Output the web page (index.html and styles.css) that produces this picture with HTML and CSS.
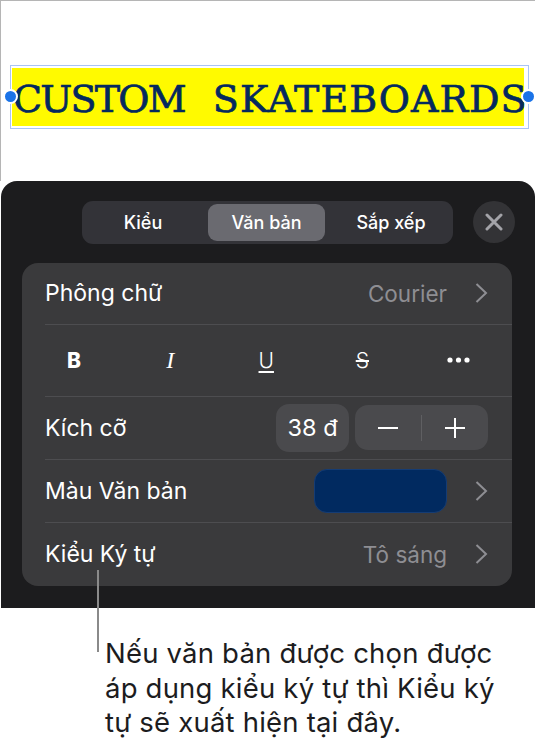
FILE: index.html
```html
<!DOCTYPE html>
<html lang="vi">
<head>
<meta charset="utf-8">
<title>Kiểu Ký tự</title>
<link rel="stylesheet" href="styles.css">
</head>
<body>
<div class="page">
  <div class="canvas">
    <div class="selection">
      <span class="handle handle-left"></span>
      <div class="highlight"><span class="word-a">CUSTOM</span> <span class="word-b">SKATEBOARDS</span></div>
      <span class="handle handle-right"></span>
    </div>
  </div>
  <section class="sheet">
    <div class="tabs-row">
      <div class="tabs">
        <div class="tab tab-first">Kiểu</div>
        <div class="tab tab-active">Văn bản</div>
        <div class="tab tab-last">Sắp xếp</div>
      </div>
      <div class="close">
        <svg width="18" height="18" viewBox="0 0 18 18"><path d="M2 2 16 16M16 2 2 16" stroke="#a3a3a8" stroke-width="3" stroke-linecap="round"/></svg>
      </div>
    </div>
    <div class="card">
      <div class="row row-font">
        <span class="label">Phông chữ</span>
        <span class="value">Courier</span>
        <svg class="chev" width="13" height="22" viewBox="0 0 13 22"><path d="M1.5 2 11 11 1.5 20" fill="none" stroke="#8e8e93" stroke-width="2"/></svg>
      </div>
      <div class="row row-style">
        <span class="st st-b">B</span>
        <span class="st st-i">I</span>
        <span class="st st-u">U</span>
        <span class="st st-s">S</span>
        <span class="st"><svg width="23" height="6" viewBox="0 0 23 6"><circle cx="3" cy="3" r="2.6" fill="#fff"/><circle cx="11.5" cy="3" r="2.6" fill="#fff"/><circle cx="20" cy="3" r="2.6" fill="#fff"/></svg></span>
      </div>
      <div class="row row-size">
        <span class="label">Kích cỡ</span>
        <span class="size-box">38 đ</span>
        <div class="stepper">
          <span class="step"><svg width="20" height="20" viewBox="0 0 20 20"><path d="M0 10H20" stroke="#fff" stroke-width="2"/></svg></span>
          <span class="step-div"></span>
          <span class="step"><svg width="20" height="20" viewBox="0 0 20 20"><path d="M0 10H20M10 0V20" stroke="#fff" stroke-width="2"/></svg></span>
        </div>
      </div>
      <div class="row row-color">
        <span class="label">Màu Văn bản</span>
        <span class="swatch"></span>
        <svg class="chev" width="13" height="22" viewBox="0 0 13 22"><path d="M1.5 2 11 11 1.5 20" fill="none" stroke="#8e8e93" stroke-width="2"/></svg>
      </div>
      <div class="row row-char">
        <span class="label">Kiểu Ký tự</span>
        <span class="value">Tô sáng</span>
        <svg class="chev" width="13" height="22" viewBox="0 0 13 22"><path d="M1.5 2 11 11 1.5 20" fill="none" stroke="#8e8e93" stroke-width="2"/></svg>
      </div>
    </div>
  </section>
  <div class="note">
    <span class="leader"></span>
    <p class="caption">Nếu văn bản được chọn được áp dụng kiểu ký tự thì Kiểu ký tự sẽ xuất hiện tại đây.</p>
  </div>
</div>
</body>
</html>
```
FILE: styles.css
```css
* { box-sizing: border-box; }
html, body { margin: 0; padding: 0; background: #fff; }
body { font-family: Inter, "Noto Sans", sans-serif; }
.page { width: 535px; height: 742px; position: relative; overflow: hidden; display: flex; flex-direction: column; }
.canvas { height: 181px; flex: none; padding: 64px 5px 0 10px; border-left: 1px solid #b5b5b5; border-top: 1px solid #b5b5b5; }
.selection { position: relative; width: 519px; height: 64px; border: 1.5px solid #a9c4f5; padding: 1.5px 4px 3px 1px; margin-left: -1px; }
.highlight { height: 58px; background: #fffa00; color: #04295f; font-family: "DejaVu Serif", serif; font-size: 38px; word-spacing: 16px; line-height: 63px; white-space: nowrap; padding-left: 1px; -webkit-text-stroke: 0.7px #04295f; }
.word-a { letter-spacing: -1.8px; }
.word-b { letter-spacing: 1px; }
.handle { position: absolute; top: 23px; width: 15px; height: 15px; border-radius: 50%; background: #1a73e8; border: 2.5px solid #fff; z-index: 1; }
.handle-left { left: -8px; }
.handle-right { right: -8px; }
.sheet { margin-left: 1px; height: 427px; flex: none; background: #1c1c1e; border-radius: 16px 16px 0 0; padding: 19.5px 0 0 21px; }
.tabs-row { display: flex; align-items: center; padding-left: 60px; height: 43px; gap: 20px; }
.tabs { width: 371px; height: 43px; background: #333338; border-radius: 11px; display: flex; align-items: center; padding: 3px; color: #fff; font-size: 18px; font-weight: 500; }
.tab { flex: 1; height: 37px; line-height: 37px; text-align: center; border-radius: 9px; }
.tab-first { flex: 0 0 123px; padding-right: 7px; }
.tab-last { padding-left: 7px; }
.tab-active { background: #6a6a70; flex: 0 0 117px; }
.close { width: 42px; height: 42px; border-radius: 50%; background: #333336; display: flex; align-items: center; justify-content: center; }
.card { width: 489.5px; height: 323px; margin-top: 19px; background: #3a3a3c; border-radius: 16px; padding-left: 23px; color: #fff; font-size: 23px; }
.row { display: flex; align-items: center; padding-right: 23.5px; border-bottom: 1px solid #4d4d50; }
.row-font { height: 62.5px; }
.row-style { height: 71.5px; justify-content: space-between; padding: 0 41px 0 17px; }
.row-size { height: 63.5px; }
.row-color { height: 63px; }
.row-char { height: 62.5px; border-bottom: none; }
.label { flex: 1; }
.value { color: #8e8e93; margin-right: 28px; font-size: 22.5px; }
.chev { flex: none; }
.st { width: 24px; height: 30px; display: flex; align-items: center; justify-content: center; font-size: 21px; }
.st-b { font-weight: 800; }
.st-i { font-family: "Liberation Serif", serif; font-style: italic; font-size: 24px; }
.st-u { text-decoration: underline; text-underline-offset: 3px; text-decoration-thickness: 1.5px; font-weight: 300; }
.st-s { text-decoration: line-through; text-decoration-thickness: 1.5px; font-weight: 300; }
.size-box { width: 73px; height: 48.5px; background: #4a4a4d; border-radius: 13px; display: flex; align-items: center; justify-content: center; margin-right: 6px; font-size: 23.5px; }
.stepper { width: 133px; height: 45px; background: #4a4a4d; border-radius: 13px; display: flex; align-items: center; }
.step { flex: 1; display: flex; align-items: center; justify-content: center; }
.step-div { width: 1px; height: 26px; background: #5f5f62; }
.swatch { width: 133px; height: 44px; background: #012a60; border: 1px solid #153c74; border-radius: 13px; margin-right: 28px; }
.note { position: relative; flex: 1; padding: 28px 0 0 105px; }
.leader { position: absolute; left: 97px; top: -38px; width: 2px; height: 82px; background: #8a8a8a; }
.caption { margin: 0; color: #1c1c1e; font-size: 27.5px; letter-spacing: 0.2px; line-height: 34.5px; width: 410px; }
```
